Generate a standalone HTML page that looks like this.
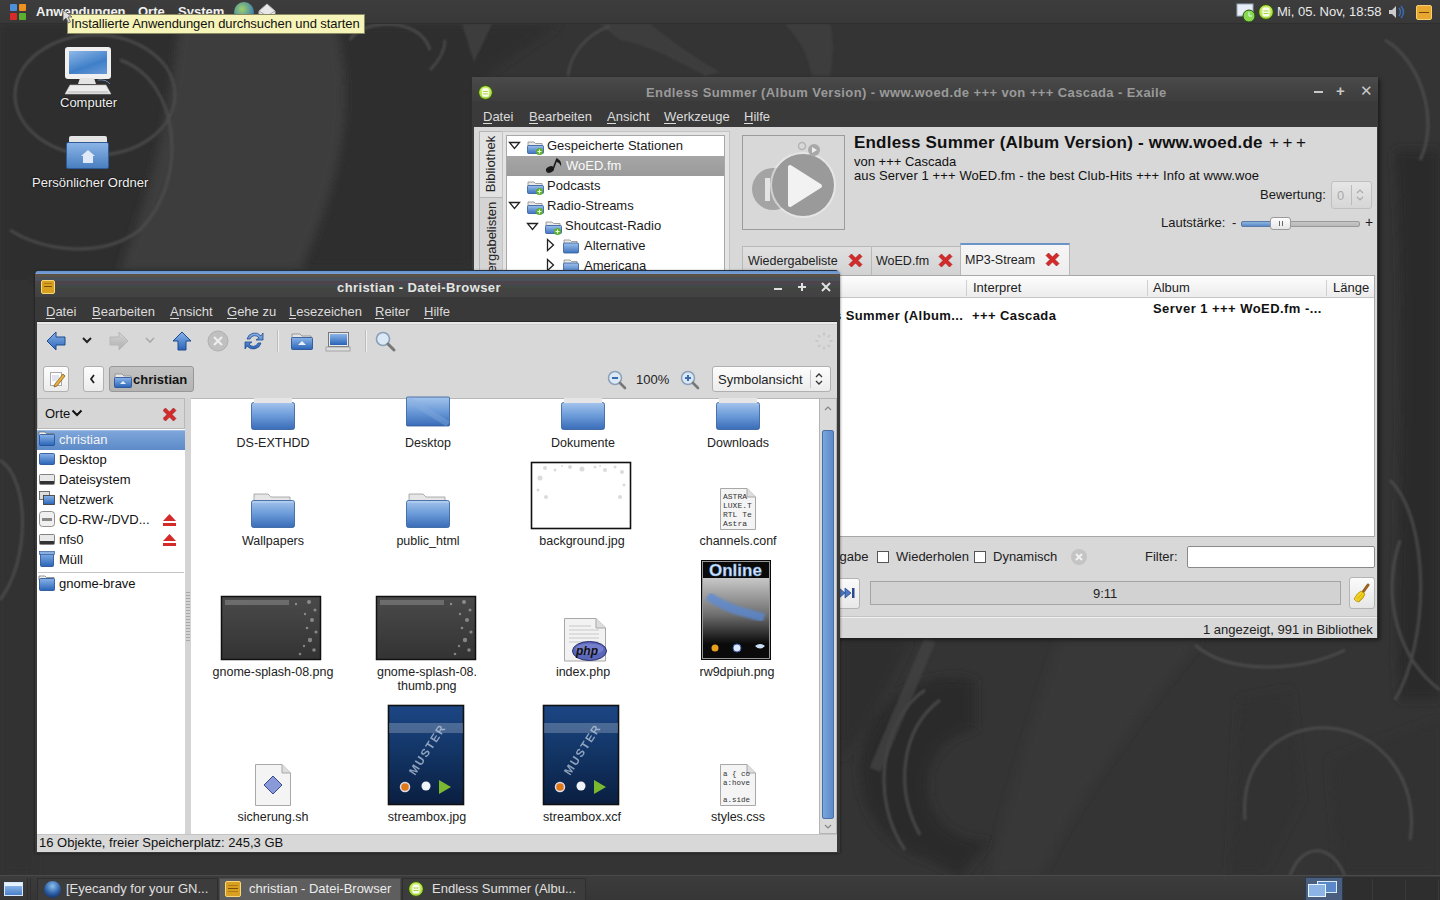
<!DOCTYPE html>
<html><head><meta charset="utf-8">
<style>
*{margin:0;padding:0;box-sizing:border-box}
html,body{width:1440px;height:900px;overflow:hidden}
body{position:relative;background:#363636;font-family:"Liberation Sans",sans-serif;font-size:13px;color:#1a1a1a}
.a{position:absolute}
.t{position:absolute;white-space:nowrap;line-height:15px;font-size:13px}
.w{color:#eee}
.b{font-weight:bold}
.il{transform:translateX(-50%);font-size:12.5px;color:#222}
u{text-decoration:none;border-bottom:1px solid currentColor;display:inline-block;line-height:12px}
</style></head><body>
<svg width="0" height="0" style="position:absolute"><defs>
 <radialGradient id="exg" cx="50%" cy="45%" r="55%"><stop offset="0" stop-color="#f0ffb0"/><stop offset=".6" stop-color="#c4ec5a"/><stop offset="1" stop-color="#8cc030"/></radialGradient>
 <symbol id="exi" viewBox="0 0 16 16"><circle cx="8" cy="8" r="7.4" fill="url(#exg)" stroke="#2e4a10" stroke-width="1"/><rect x="4.5" y="3.5" width="7" height="9" rx="1.5" fill="#f8fcec"/><path d="M5.5 7h5M5.5 9.5h5" stroke="#a8d040" stroke-width="1"/></symbol>
</defs></svg>

<!-- background swirls -->
<svg class="a" style="left:0;top:0" width="1440" height="900">
 <rect width="1440" height="900" fill="#343434"/>
 <defs><filter id="bb" x="-20%" y="-20%" width="140%" height="140%"><feGaussianBlur stdDeviation="5"/></filter><filter id="bs"><feGaussianBlur stdDeviation="0.8"/></filter></defs>
 <g fill="#2d2d2d" filter="url(#bb)">
  <path d="M0 24 H180 C170 120 150 200 120 280 L0 280Z"/>
  <path d="M0 280 H35 V876 H0Z" fill="#303030"/>
  <path d="M335 24 H560 C520 50 490 70 472 90 V270 H300 C330 200 360 120 335 24Z"/>
  <path d="M840 640 H910 L870 720 L840 760Z"/>
  <path d="M1395 150 H1440 V700 H1400 C1390 600 1410 400 1395 150Z" fill="#2c2c2c"/>
  <path d="M1240 700 L1290 690 L1300 800 L1260 876 H1230Z" fill="#303030"/>
  <path d="M1330 760 L1440 720 V876 H1340Z" fill="#313131"/>
  <path d="M975 680 A90 90 0 0 0 930 860 L960 876 L990 840 A50 50 0 0 1 975 730 Z" fill="#2b2b2b"/>
 </g>
 <g fill="#3c3c3c" filter="url(#bb)">
  <path d="M180 24 H335 C360 120 330 200 300 270 H120 C150 200 170 120 180 24Z"/>
  <path d="M1060 640 H1200 C1150 700 1080 790 1040 876 H990 C1010 790 1040 700 1060 640Z" fill="#393939"/>
 </g>
 <g fill="none" stroke="#4e4e4e" stroke-width="3" opacity=".85" filter="url(#bs)">
  <ellipse cx="95" cy="95" rx="80" ry="60"/>
  <path d="M120 60 C180 80 190 180 140 230 C100 260 40 250 10 230"/>
  <path d="M350 40 C360 20 420 15 430 50"/>
  <path d="M1245 820 C1240 760 1280 725 1330 728 C1380 732 1420 780 1410 840"/>
  <path d="M1290 876 C1300 845 1330 840 1345 876"/>
  <path d="M925 690 C880 720 870 800 905 850"/>
  <path d="M940 700 C900 730 895 790 920 835"/>
  <path d="M1195 645 C1230 675 1300 672 1345 650"/>
  <path d="M0 460 C30 480 30 560 0 600"/>
  <path d="M1385 40 C1420 60 1440 120 1420 160"/>
  <path d="M1390 480 C1430 520 1430 640 1395 700"/>
  <path d="M1400 540 C1380 600 1400 660 1440 690"/>
 </g>
 <g fill="#3e3e3e" filter="url(#bs)">
  <path d="M462 24 H492 L474 62 Z"/>
  <path d="M600 24 H650 C670 40 690 55 720 72 L705 76 C680 62 650 45 620 40 Z"/>
  <path d="M785 24 H830 C835 45 832 65 830 76 H812 C808 55 800 40 785 24Z"/>
 </g>
 <g fill="none" stroke="#484848" stroke-width="2.5" filter="url(#bs)">
  <path d="M568 76 C570 55 585 35 610 26"/>
  <path d="M430 70 C440 60 445 50 445 40"/>
 </g>
 <g fill="none" stroke="#424242" stroke-width="12" opacity=".8" filter="url(#bs)">
  <path d="M930 640 L875 770"/>
 </g>
</svg>

<!-- TOP PANEL -->
<div id="toppanel" class="a" style="left:0;top:0;width:1440px;height:24px;background:linear-gradient(#3d3d3d,#383838);border-bottom:1px solid #2e2e2e">
 <div class="a" style="left:10px;top:4px;width:7px;height:7px;background:#4f8fd8;border-radius:1px"></div>
 <div class="a" style="left:19px;top:4px;width:7px;height:7px;background:#f09020;border-radius:1px"></div>
 <div class="a" style="left:10px;top:13px;width:7px;height:7px;background:#d82a2a;border-radius:1px"></div>
 <div class="a" style="left:19px;top:13px;width:7px;height:7px;background:#5cb030;border-radius:1px"></div>
 <div class="t b w" style="left:36px;top:4px;color:#f0f0f0">Anwendungen</div>
 <div class="t b w" style="left:138px;top:4px;color:#f0f0f0">Orte</div>
 <div class="t b w" style="left:178px;top:4px;color:#f0f0f0">System</div>
 <div class="a" style="left:234px;top:2px;width:20px;height:20px;border-radius:50%;background:radial-gradient(circle at 40% 35%,#9fd06a,#3a7fb0 70%,#1f4f80)"></div>
 <svg class="a" style="left:257px;top:2px" width="20" height="20"><path d="M2 9 L10 2 L18 9 L18 18 L2 18 Z" fill="#e8e8e8" stroke="#bbb"/><path d="M2 9 L10 14 L18 9" fill="none" stroke="#aaa"/></svg>
 <svg class="a" style="left:1236px;top:3px" width="22" height="20"><rect x="1" y="1" width="16" height="12" fill="#e8eef8" stroke="#9ab"/><circle cx="13" cy="13" r="6" fill="#88d850" stroke="#245010"/><path d="M13 9v4h3" stroke="#dff" fill="none"/></svg>
 <svg class="a" style="left:1258px;top:4px" width="16" height="16"><use href="#exi"/></svg>
 <div class="t w" style="left:1277px;top:4px;color:#eaeaea">Mi, 05. Nov, 18:58</div>
 <svg class="a" style="left:1387px;top:3px" width="20" height="18"><path d="M2 7h3l4-4v12l-4-4H2z" fill="#ccc"/><path d="M12 5q3 4 0 8M14 3q5 6 0 12" stroke="#3a6ab0" fill="none" stroke-width="1.5"/></svg>
 <div class="a" style="left:1416px;top:5px;width:16px;height:15px;background:#e8a830;border:1px solid #f6d070;border-radius:2px"><div class="a" style="left:2px;top:6px;width:10px;height:1px;background:#6a4a10"></div></div>
</div>

<!-- DESKTOP ICONS -->
<div class="a" style="left:65px;top:47px;width:46px;height:32px;background:#f0f0f0;border-radius:3px"><div class="a" style="left:4px;top:4px;width:38px;height:23px;background:linear-gradient(160deg,#8fb8e8,#3f7fc8 60%,#6a9ad8)"></div></div>
<svg class="a" style="left:62px;top:77px" width="52" height="19"><path d="M18 1h14l2 6H16z" fill="#e4e4e4"/><path d="M8 8h36l5 9H3z" fill="#ececec" stroke="#b8b8b8" stroke-width=".6"/><path d="M6 15h40" stroke="#c4c4c4" stroke-width="1.5"/><path d="M36 3q8-1 12 4" stroke="#6a8ab0" fill="none" stroke-width="1"/></svg>
<div class="t w" style="left:60px;top:95px;color:#f0f0f0;text-shadow:0 0 2px #000">Computer</div>
<div class="a" style="left:69px;top:136px;width:38px;height:8px;background:#e4e4e4;border-radius:2px 2px 0 0"></div>
<div class="a" style="left:66px;top:142px;width:43px;height:27px;background:linear-gradient(#8ab4e6,#4a7fc0);border-radius:2px;border:1px solid #2e5a98"><div class="a" style="left:14px;top:7px;width:0;height:0;border-left:7px solid transparent;border-right:7px solid transparent;border-bottom:6px solid #dfe9f7"></div><div class="a" style="left:16px;top:13px;width:10px;height:7px;background:#dfe9f7"></div></div>
<div class="t w" style="left:32px;top:175px;color:#f0f0f0;text-shadow:0 0 2px #000">Persönlicher Ordner</div>

<!-- EXAILE -->
<div id="exaile" class="a" style="left:472px;top:77px;width:911px;height:566px">
 <div class="a" style="left:0;top:0;width:906px;height:561px;background:#3a3a3a;box-shadow:2px 2px 4px rgba(0,0,0,.5)"></div>
 <!-- title bar -->
 <div class="a" style="left:0;top:0;width:906px;height:24px;background:linear-gradient(#4a4a4a,#3d3d3d)"></div>
 <svg class="a" style="left:6px;top:8px" width="15" height="15"><use href="#exi"/></svg>
 <div class="t b" style="left:174px;top:8px;color:#9a9a9a;letter-spacing:0.4px">Endless Summer (Album Version) - www.woed.de +++ von +++ Cascada - Exaile</div>
 <div class="a" style="left:842px;top:14px;width:9px;height:2px;background:#c8c8c8"></div>
 <div class="t b" style="left:864px;top:6px;color:#c8c8c8;font-size:15px">+</div>
 <div class="t" style="left:888px;top:6px;color:#c8c8c8;font-size:15px">✕</div>
 <!-- menu -->
 <div class="t" style="left:11px;top:32px;color:#dcdcdc"><u>D</u>atei</div>
 <div class="t" style="left:57px;top:32px;color:#dcdcdc"><u>B</u>earbeiten</div>
 <div class="t" style="left:135px;top:32px;color:#dcdcdc"><u>A</u>nsicht</div>
 <div class="t" style="left:192px;top:32px;color:#dcdcdc"><u>W</u>erkzeuge</div>
 <div class="t" style="left:272px;top:32px;color:#dcdcdc"><u>H</u>ilfe</div>
 <!-- content -->
 <div class="a" style="left:2px;top:50px;width:903px;height:511px;background:#d8d8d8">
 </div>
</div>
<div id="exc" class="a" style="left:0;top:0">
 <!-- vertical tabs -->
 <div class="a" style="left:479px;top:131px;width:23px;height:67px;background:#e2e2e2;border:1px solid #b4b4b4;border-right:none"></div>
 <div class="a" style="left:479px;top:197px;width:23px;height:90px;background:#d4d4d4;border:1px solid #b4b4b4;border-right:none"></div>
 <div class="t" style="left:490px;top:164px;transform:translate(-50%,-50%) rotate(-90deg);color:#222">Bibliothek</div>
 <div class="t" style="left:491px;top:252px;transform:translate(-50%,-50%) rotate(-90deg);color:#222">Wiedergabelisten</div>
 <!-- tree frame -->
 <div class="a" style="left:502px;top:131px;width:228px;height:160px;background:#e4e4e4;border:1px solid #c4c4c4"></div>
 <div class="a" style="left:506px;top:135px;width:219px;height:150px;background:#fff;border:1px solid #a8a8a8"></div>
 <div class="a" style="left:507px;top:156px;width:217px;height:20px;background:linear-gradient(#a6a6a6,#9a9a9a)"></div>
 <svg class="a" style="left:508px;top:140px" width="14" height="80"><path d="M1.5 2.5h10l-5 6z" fill="none" stroke="#222" stroke-width="1.3"/><path d="M1.5 62.5h10l-5 6z" fill="none" stroke="#222" stroke-width="1.3"/></svg>
 <svg class="a" style="left:526px;top:221px" width="14" height="14"><path d="M1.5 2.5h10l-5 6z" fill="none" stroke="#222" stroke-width="1.3"/></svg>
 <svg class="a" style="left:546px;top:238px" width="10" height="40"><path d="M1.5 1.5v11l6-5.5z" fill="none" stroke="#222" stroke-width="1.3"/><path d="M1.5 21.5v11l6-5.5z" fill="none" stroke="#222" stroke-width="1.3"/></svg>
 <svg class="a" style="left:0;top:0;overflow:visible" width="1" height="1">
  <defs><linearGradient id="fg" x1="0" y1="0" x2="0" y2="1"><stop offset="0" stop-color="#9cc0ec"/><stop offset="1" stop-color="#3f74c0"/></linearGradient>
  <g id="sfold"><path d="M1 2h6l1.5 1.5H15V6H1z" fill="#e8e8e8" stroke="#8a8a8a" stroke-width=".8"/><rect x="0.5" y="5.5" width="16" height="8" rx="1" fill="url(#fg)" stroke="#2e5a98" stroke-width=".8"/><circle cx="12.5" cy="11.5" r="3.5" fill="#5cb030"/><path d="M12.5 9.5v4M10.5 11.5h4" stroke="#e8ffd0" stroke-width="1.2"/></g>
  <g id="pfold"><path d="M1 1h6l1.5 1.5H14V5H1z" fill="#eaeaea" stroke="#8a8a8a" stroke-width=".8"/><rect x="0.5" y="4" width="15" height="10" rx="1" fill="url(#fg)" stroke="#2e5a98" stroke-width=".8"/></g></defs>
  <use href="#sfold" x="527" y="140"/><use href="#sfold" x="527" y="180"/><use href="#sfold" x="527" y="200"/><use href="#sfold" x="545" y="220"/>
  <use href="#pfold" x="563" y="239"/><use href="#pfold" x="563" y="259"/>
  <ellipse cx="550" cy="169.5" rx="4.2" ry="3" transform="rotate(-25 550 169.5)" fill="#1a1a1a"/><path d="M553.5 168 L557 158.5" stroke="#1a1a1a" stroke-width="1.6"/><path d="M557 158.5 q5 2 4 8 q-1-4-4.5-4.5z" fill="#1a1a1a"/>
 </svg>
 <div class="t" style="left:547px;top:138px">Gespeicherte Stationen</div>
 <div class="t" style="left:566px;top:158px;color:#fafafa">WoED.fm</div>
 <div class="t" style="left:547px;top:178px">Podcasts</div>
 <div class="t" style="left:547px;top:198px">Radio-Streams</div>
 <div class="t" style="left:565px;top:218px">Shoutcast-Radio</div>
 <div class="t" style="left:584px;top:238px">Alternative</div>
 <div class="t" style="left:584px;top:258px">Americana</div>
 <!-- album art -->
 <div class="a" style="left:742px;top:135px;width:103px;height:95px;background:#d8d8d8;border:1px solid #9c9c9c"></div>
 <svg class="a" style="left:742px;top:135px" width="103" height="95">
  <circle cx="31" cy="54" r="21" fill="#a4a4a4"/>
  <path d="M23 43 h5 v23 h-5z" fill="#e4e4e4"/>
  <circle cx="61" cy="50" r="33" fill="#f0f0f0" opacity=".6"/>
  <circle cx="61" cy="50" r="31" fill="#9a9a9a"/>
  <path d="M48 32 L48 70 L78 51 Z" fill="#f2f2f2" stroke="#f2f2f2" stroke-width="4" stroke-linejoin="round"/>
  <circle cx="60" cy="11" r="3.5" fill="none" stroke="#b4b4b4" stroke-width="1.5"/>
  <circle cx="72" cy="15" r="6" fill="#a8a8a8"/><path d="M70 12 v6 l5 -3z" fill="#eee"/>
 </svg>
 <div class="t b" style="left:854px;top:133px;font-size:17px;line-height:20px;letter-spacing:0.2px;color:#111">Endless Summer (Album Version) - www.woed.de</div>
 <div class="t" style="left:1269px;top:133px;font-size:17px;line-height:20px;letter-spacing:3.6px;color:#111">+++</div>
 <div class="t" style="left:854px;top:154px;color:#111">von +++ Cascada</div>
 <div class="t" style="left:854px;top:168px;color:#111;letter-spacing:0.1px">aus Server 1 +++ WoED.fm - the best Club-Hits +++ Info at www.woe</div>
 <div class="t" style="left:1260px;top:187px">Bewertung:</div>
 <div class="a" style="left:1331px;top:181px;width:41px;height:28px;background:linear-gradient(#e6e6e6,#d6d6d6);border:1px solid #c0c0c0;border-radius:3px"></div>
 <div class="a" style="left:1351px;top:185px;width:1px;height:20px;background:#bbb"></div>
 <div class="t" style="left:1337px;top:188px;color:#aaa">0</div>
 <svg class="a" style="left:1354px;top:187px" width="12" height="16"><path d="M3 6l3-3 3 3M3 10l3 3 3-3" fill="none" stroke="#aaa" stroke-width="1.2"/></svg>
 <div class="t" style="left:1161px;top:215px">Lautstärke:</div>
 <div class="t" style="left:1232px;top:215px">-</div>
 <div class="a" style="left:1241px;top:221px;width:119px;height:6px;background:linear-gradient(#c6c6c6,#b8b8b8);border:1px solid #9a9a9a;border-radius:2px"></div>
 <div class="a" style="left:1241px;top:221px;width:32px;height:6px;background:linear-gradient(#8fb4e0,#5a8ac8);border:1px solid #5a7aa8;border-radius:2px"></div>
 <div class="a" style="left:1270px;top:217px;width:21px;height:13px;background:linear-gradient(#fdfdfd,#e6e6e6);border:1px solid #9a9a9a;border-radius:3px"></div>
 <div class="a" style="left:1279px;top:221px;width:1px;height:5px;background:#666"></div><div class="a" style="left:1282px;top:221px;width:1px;height:5px;background:#666"></div>
 <div class="t" style="left:1365px;top:215px;font-size:14px">+</div>
 <!-- tabs -->
 <div class="a" style="left:742px;top:246px;width:130px;height:30px;background:linear-gradient(#e0e0e0,#d2d2d2);border:1px solid #b8b8b8;border-bottom:none"></div>
 <div class="a" style="left:871px;top:246px;width:90px;height:30px;background:linear-gradient(#e0e0e0,#d2d2d2);border:1px solid #b8b8b8;border-bottom:none"></div>
 <div class="a" style="left:960px;top:243px;width:110px;height:33px;background:linear-gradient(#f6f6f6,#ececec);border:1px solid #b8b8b8;border-top:2px solid #6a94c8;border-bottom:none"></div>
 <div class="t" style="left:748px;top:254px;font-size:12.5px;color:#222">Wiedergabeliste</div>
 <div class="t" style="left:876px;top:254px;font-size:12.5px;color:#222">WoED.fm</div>
 <div class="t" style="left:965px;top:253px;font-size:12.5px;color:#222">MP3-Stream</div>
 <svg class="a" style="left:0;top:0;overflow:visible" width="1" height="1">
  <defs><g id="rx"><path d="M0 2.5 L2.5 0 L6.5 4 L10.5 0 L13 2.5 L9 6.5 L13 10.5 L10.5 13 L6.5 9 L2.5 13 L0 10.5 L4 6.5 Z" fill="#d42a2a" stroke="#a01818" stroke-width=".6"/></g></defs>
  <use href="#rx" x="849" y="254"/><use href="#rx" x="939" y="254"/><use href="#rx" x="1046" y="253"/>
 </svg>
 <!-- list -->
 <div class="a" style="left:742px;top:275px;width:633px;height:262px;background:#fff;border:1px solid #a8a8a8"></div>
 <div class="a" style="left:743px;top:276px;width:631px;height:22px;background:linear-gradient(#fdfdfd,#ececec);border-bottom:1px solid #c4c4c4"></div>
 <div class="a" style="left:966px;top:280px;width:1px;height:16px;background:#d0d0d0"></div>
 <div class="a" style="left:1147px;top:280px;width:1px;height:16px;background:#d0d0d0"></div>
 <div class="a" style="left:1326px;top:280px;width:1px;height:16px;background:#d0d0d0"></div>
 <div class="t" style="left:973px;top:280px;color:#222">Interpret</div>
 <div class="t" style="left:1153px;top:280px;color:#222">Album</div>
 <div class="t" style="left:1333px;top:280px;color:#222">Länge</div>
 <div class="t b" style="left:789px;top:308px;color:#111;letter-spacing:0.4px">Endless Summer (Album...</div>
 <div class="t b" style="left:972px;top:308px;color:#111;letter-spacing:0.4px">+++ Cascada</div>
 <div class="t b" style="left:1153px;top:301px;color:#111;letter-spacing:0.45px">Server 1 +++ WoED.fm -...</div>
 <!-- controls -->
 <div class="t" style="left:763px;top:549px;color:#222">Zufallswiedergabe</div>
 <div class="a" style="left:877px;top:551px;width:12px;height:12px;background:#fff;border:1px solid #555"></div>
 <div class="t" style="left:896px;top:549px;color:#222">Wiederholen</div>
 <div class="a" style="left:974px;top:551px;width:12px;height:12px;background:#fff;border:1px solid #555"></div>
 <div class="t" style="left:993px;top:549px;color:#222">Dynamisch</div>
 <div class="a" style="left:1071px;top:549px;width:16px;height:16px;border-radius:50%;background:#c4c4c4"></div>
 <svg class="a" style="left:1071px;top:549px" width="16" height="16"><path d="M5 5l6 6M11 5l-6 6" stroke="#f2f2f2" stroke-width="2"/></svg>
 <div class="t" style="left:1145px;top:549px;color:#222">Filter:</div>
 <div class="a" style="left:1187px;top:546px;width:188px;height:22px;background:#fff;border:1px solid #8a8a8a;border-radius:2px"></div>
 <div class="a" style="left:820px;top:578px;width:40px;height:31px;background:linear-gradient(#fbfbfb,#e8e8e8);border:1px solid #b4b4b4;border-radius:3px"></div>
 <svg class="a" style="left:838px;top:586px" width="20" height="14"><path d="M1 2l6 5-6 5zM7 2l6 5-6 5z" fill="#4a7ac0" stroke="#2a4a90" stroke-width=".8"/><rect x="14" y="2" width="2.5" height="10" fill="#2a4a90"/></svg>
 <div class="a" style="left:870px;top:581px;width:471px;height:24px;background:#d2d2d2;border:1px solid #a4a4a4"></div>
 <div class="t" style="left:1093px;top:586px;color:#222">9:11</div>
 <div class="a" style="left:1349px;top:577px;width:26px;height:32px;background:linear-gradient(#fbfbfb,#e6e6e6);border:1px solid #b4b4b4;border-radius:3px"></div>
 <svg class="a" style="left:1352px;top:583px" width="20" height="20"><path d="M11 9 L16 2" stroke="#9a6020" stroke-width="3" stroke-linecap="round"/><path d="M2 16 Q5 10 9 8 L13 11 Q12 15 7 19 Q4 19 2 16Z" fill="#f0d020" stroke="#b89010" stroke-width=".8"/><path d="M5 16 L10 11 M7 18 L12 12" stroke="#c8a010" stroke-width=".7"/></svg>
 <div class="a" style="left:474px;top:616px;width:903px;height:1px;background:#c4c4c4"></div>
 <div class="a" style="left:474px;top:617px;width:903px;height:1px;background:#f0f0f0"></div>
 <div class="t" style="left:1203px;top:622px;color:#222">1 angezeigt, 991 in Bibliothek</div>
</div>

<!-- NAUTILUS -->
<div id="naut" class="a" style="left:0;top:0">
 <div class="a" style="left:35px;top:271px;width:805px;height:582px;background:#393939;border-radius:5px 5px 0 0;box-shadow:0 0 3px rgba(0,0,0,.6)"></div>
 <div class="a" style="left:35px;top:270px;width:805px;height:27px;border-radius:5px 5px 0 0;background:linear-gradient(#243040 0,#243040 1.5px,#6a94cc 1.5px,#7aa0d8 4px,#5a5244 4px,#5a5244 7px,#4a5058 7px,#4a5058 11px,#504448 11px,#484650 15px,#404a40 17px,#434343 20px,#424242 27px)"></div>
 <div class="a" style="left:41px;top:280px;width:14px;height:14px;background:#d8a020;border:1px solid #f8d878;border-radius:2px"><div class="a" style="left:2px;top:5px;width:8px;height:1px;background:#7a5008"></div><div class="a" style="left:2px;top:2px;width:8px;height:1px;background:#b07a10"></div></div>
 <div class="t b" style="left:337px;top:280px;color:#e4e4e4;letter-spacing:0.4px">christian - Datei-Browser</div>
 <div class="a" style="left:774px;top:288px;width:8px;height:2px;background:#e0e0e0"></div>
 <div class="a" style="left:798px;top:286px;width:8px;height:2px;background:#e0e0e0"></div><div class="a" style="left:801px;top:283px;width:2px;height:8px;background:#e0e0e0"></div>
 <svg class="a" style="left:821px;top:282px" width="10" height="10"><path d="M1 1l8 8M9 1l-8 8" stroke="#e0e0e0" stroke-width="2"/></svg>
 <div class="t" style="left:46px;top:304px;color:#dcdcdc"><u>D</u>atei</div>
 <div class="t" style="left:92px;top:304px;color:#dcdcdc"><u>B</u>earbeiten</div>
 <div class="t" style="left:170px;top:304px;color:#dcdcdc"><u>A</u>nsicht</div>
 <div class="t" style="left:227px;top:304px;color:#dcdcdc"><u>G</u>ehe zu</div>
 <div class="t" style="left:289px;top:304px;color:#dcdcdc"><u>L</u>esezeichen</div>
 <div class="t" style="left:375px;top:304px;color:#dcdcdc"><u>R</u>eiter</div>
 <div class="t" style="left:424px;top:304px;color:#dcdcdc"><u>H</u>ilfe</div>
 <!-- content -->
 <div class="a" style="left:37px;top:322px;width:800px;height:530px;background:#d8d8d8"></div>
 <div class="a" style="left:37px;top:321px;width:800px;height:1px;background:#2a2a2a"></div><div class="a" style="left:37px;top:322px;width:800px;height:2px;background:#e8e8e8"></div><div class="a" style="left:37px;top:324px;width:800px;height:1px;background:#cecece"></div>
 <!-- toolbar icons -->
 <svg class="a" style="left:0;top:0;overflow:visible" width="1" height="1">
  <defs>
   <linearGradient id="bl" x1="0" y1="0" x2="0" y2="1"><stop offset="0" stop-color="#8ab4e8"/><stop offset="1" stop-color="#2a64b8"/></linearGradient>
   <linearGradient id="gr" x1="0" y1="0" x2="0" y2="1"><stop offset="0" stop-color="#d4d4d4"/><stop offset="1" stop-color="#b0b0b0"/></linearGradient>
  </defs>
  <path d="M47 341 L56 332 L56 337 L65 337 L65 345 L56 345 L56 350 Z" fill="url(#bl)" stroke="#1e4a90" stroke-width="1"/>
  <path d="M83 338 L87 342 L91 338" fill="none" stroke="#222" stroke-width="2"/>
  <path d="M128 341 L119 332 L119 337 L110 337 L110 345 L119 345 L119 350 Z" fill="url(#gr)" stroke="#b8b8b8" stroke-width="1"/>
  <path d="M146 338 L150 342 L154 338" fill="none" stroke="#aaa" stroke-width="1.6"/>
  <path d="M182 332 L191 341 L186 341 L186 350 L178 350 L178 341 L173 341 Z" fill="url(#bl)" stroke="#1e4a90" stroke-width="1"/>
  <circle cx="218" cy="341" r="10" fill="#c0c0c0" stroke="#b0b0b0"/><path d="M214 337l8 8M222 337l-8 8" stroke="#eee" stroke-width="2.2"/>
  <path d="M247 339 a8 8 0 0 1 14 -3 l2 -3 v7 h-7 l3 -2 a5 5 0 0 0 -9 1z M261 343 a8 8 0 0 1 -14 3 l-2 3 v-7 h7 l-3 2 a5 5 0 0 0 9 -1z" fill="url(#bl)" stroke="#1e4a90" stroke-width=".8"/>
  <rect x="277" y="330" width="1" height="22" fill="#bcbcbc"/><rect x="278" y="330" width="1" height="22" fill="#f0f0f0"/>
  <path d="M292 334 h8 l2 2 h9 v3 h-19z" fill="#e4e4e4" stroke="#888" stroke-width=".8"/>
  <rect x="291.5" y="337.5" width="21" height="12" rx="1" fill="url(#bl)" stroke="#1e4a90" stroke-width=".8"/>
  <path d="M298 345 l4-4 4 4z" fill="#e8f0fa"/>
  <rect x="328.5" y="332.5" width="20" height="14" fill="#e8e8e8" stroke="#777"/><rect x="330" y="334" width="17" height="11" fill="url(#bl)"/>
  <rect x="326" y="347" width="24" height="4" fill="#ddd" stroke="#999" stroke-width=".8"/>
  <rect x="365" y="330" width="1" height="22" fill="#bcbcbc"/><rect x="366" y="330" width="1" height="22" fill="#f0f0f0"/>
  <circle cx="383" cy="339" r="6.5" fill="#dbe8f6" stroke="#8aa0b8" stroke-width="1.6"/><path d="M388 344 l6 6" stroke="#777" stroke-width="3" stroke-linecap="round"/>
  <g stroke="#c4c4c4" stroke-width="1.6" stroke-linecap="round"><path d="M824 333v2M824 347v2M816 341h2M830 341h2M818.5 335.5l1.2 1.2M828.3 345.3l1.2 1.2M818.5 346.5l1.2-1.2M828.3 336.7l1.2-1.2"/></g>
 </svg>
 <!-- location bar -->
 <div class="a" style="left:43px;top:366px;width:26px;height:26px;background:linear-gradient(#fdfdfd,#ececec);border:1px solid #b0b0b0;border-radius:3px"></div>
 <svg class="a" style="left:48px;top:370px" width="18" height="18"><rect x="2.5" y="2.5" width="11" height="13" fill="#fff" stroke="#aaa"/><path d="M4 6h7M4 8h7M4 10h5" stroke="#c8c8e0"/><path d="M7 14 L15 4 L17 6 L9 16 L6 17z" fill="#e8b040" stroke="#806020" stroke-width=".8"/></svg>
 <div class="a" style="left:83px;top:366px;width:21px;height:26px;background:linear-gradient(#fdfdfd,#ececec);border:1px solid #b0b0b0;border-radius:3px"></div>
 <svg class="a" style="left:88px;top:373px" width="10" height="12"><path d="M6 2 L3 6 L6 10" fill="none" stroke="#222" stroke-width="1.8"/></svg>
 <div class="a" style="left:109px;top:366px;width:85px;height:26px;background:linear-gradient(#c2c2c2,#b4b4b4);border:1px solid #989898;border-radius:3px"></div>
 <svg class="a" style="left:113px;top:371px" width="20" height="18"><path d="M2 3 h7 l2 2 h7 v3 H2z" fill="#e8e8e8" stroke="#888" stroke-width=".8"/><rect x="1.5" y="6.5" width="17" height="10" rx="1" fill="url(#bl)" stroke="#1e4a90" stroke-width=".8"/><path d="M7 13 l3-3 3 3z" fill="#e8f0fa"/></svg>
 <div class="t b" style="left:133px;top:372px;color:#111">christian</div>
 <svg class="a" style="left:606px;top:369px" width="22" height="22"><circle cx="9" cy="9" r="6.5" fill="#dbe8f6" stroke="#8aa0b8" stroke-width="1.5"/><path d="M6 9h6" stroke="#3a6ab0" stroke-width="2"/><path d="M14 14 l5 5" stroke="#777" stroke-width="2.6" stroke-linecap="round"/></svg>
 <div class="t" style="left:636px;top:372px;color:#222">100%</div>
 <svg class="a" style="left:679px;top:369px" width="22" height="22"><circle cx="9" cy="9" r="6.5" fill="#dbe8f6" stroke="#8aa0b8" stroke-width="1.5"/><path d="M6 9h6M9 6v6" stroke="#3a6ab0" stroke-width="2"/><path d="M14 14 l5 5" stroke="#777" stroke-width="2.6" stroke-linecap="round"/></svg>
 <div class="a" style="left:712px;top:366px;width:119px;height:26px;background:linear-gradient(#fdfdfd,#ececec);border:1px solid #b0b0b0;border-radius:3px"></div>
 <div class="a" style="left:810px;top:370px;width:1px;height:18px;background:#c8c8c8"></div>
 <div class="t" style="left:718px;top:372px;color:#222">Symbolansicht</div>
 <svg class="a" style="left:813px;top:371px" width="12" height="16"><path d="M3 6l3-3 3 3M3 10l3 3 3-3" fill="none" stroke="#333" stroke-width="1.3"/></svg>
 <!-- sidebar -->
 <div class="a" style="left:37px;top:398px;width:148px;height:31px;background:#d6d6d6;border:1px solid #b8b8b8"></div>
 <div class="t" style="left:45px;top:406px;color:#111">Orte</div>
 <svg class="a" style="left:71px;top:408px" width="12" height="10"><path d="M1.5 2.5 L6 7 L10.5 2.5" fill="none" stroke="#111" stroke-width="2"/></svg>
 <svg class="a" style="left:163px;top:408px" width="14" height="13"><path d="M0 2.5 L2.5 0 L6.5 4 L10.5 0 L13 2.5 L9 6.5 L13 10.5 L10.5 13 L6.5 9 L2.5 13 L0 10.5 L4 6.5 Z" fill="#d42a2a" stroke="#a01818" stroke-width=".6"/></svg>
 <div class="a" style="left:37px;top:429px;width:148px;height:405px;background:#fff"></div>
 <div class="a" style="left:37px;top:430px;width:148px;height:20px;background:linear-gradient(#7ea6da,#5c8ac8);border-top:1px solid #9cbce6"></div>
 <svg class="a" style="left:0;top:0;overflow:visible" width="1" height="1">
  <defs><g id="sic"><rect x="0.5" y="2.5" width="15" height="11" rx="1" fill="url(#bl)" stroke="#1e4a90" stroke-width=".8"/></g>
  <g id="drv"><rect x="0.5" y="3.5" width="15" height="10" rx="1" fill="#e8e8e8" stroke="#666" stroke-width=".8"/><rect x="1" y="10" width="14" height="3" fill="#333"/></g>
  <g id="ej"><path d="M0 7 L6.5 0 L13 7z" fill="#d42a2a"/><rect x="0" y="9" width="13" height="3" fill="#d42a2a"/></g></defs>
  <path d="M39 432 h6 l1.5 1.5 H54 V436 H39z" fill="#eee" stroke="#555" stroke-width=".6"/><rect x="39.5" y="434.5" width="15" height="11" rx="1" fill="url(#bl)" stroke="#1e4a90" stroke-width=".8"/>
  <use href="#sic" x="39" y="451"/>
  <use href="#drv" x="39" y="471"/>
  <rect x="39.5" y="491.5" width="10" height="8" fill="#ddd" stroke="#555" stroke-width=".8"/><rect x="43.5" y="495.5" width="11" height="9" fill="url(#bl)" stroke="#333" stroke-width=".8"/>
  <rect x="39.5" y="511.5" width="15" height="15" rx="3" fill="#f0f0f0" stroke="#777" stroke-width=".8"/><rect x="42" y="518" width="10" height="3" fill="#888"/>
  <use href="#drv" x="39" y="531"/>
  <rect x="40.5" y="552.5" width="13" height="14" rx="1" fill="url(#bl)" stroke="#1e4a90" stroke-width=".8"/><rect x="39.5" y="551.5" width="15" height="3" fill="#8ab0e0" stroke="#1e4a90" stroke-width=".6"/>
  <use href="#ej" x="163" y="514"/><use href="#ej" x="163" y="534"/>
  <rect x="38" y="572" width="146" height="1" fill="#c4c4c4"/>
  <path d="M39 576 h6 l1.5 1.5 H54 V580 H39z" fill="#eee" stroke="#555" stroke-width=".6"/><rect x="39.5" y="578.5" width="15" height="12" rx="1" fill="url(#bl)" stroke="#1e4a90" stroke-width=".8"/>
 </svg>
 <div class="t" style="left:59px;top:432px;color:#f4f4f4">christian</div>
 <div class="t" style="left:59px;top:452px;color:#111">Desktop</div>
 <div class="t" style="left:59px;top:472px;color:#111">Dateisystem</div>
 <div class="t" style="left:59px;top:492px;color:#111">Netzwerk</div>
 <div class="t" style="left:59px;top:512px;color:#111">CD-RW-/DVD...</div>
 <div class="t" style="left:59px;top:532px;color:#111">nfs0</div>
 <div class="t" style="left:59px;top:552px;color:#111">Müll</div>
 <div class="t" style="left:59px;top:576px;color:#111">gnome-brave</div>
 <!-- pane separator -->
 <div class="a" style="left:185px;top:398px;width:6px;height:436px;background:#d4d4d4"></div><div class="a" style="left:186px;top:592px;width:4px;height:50px;background:repeating-linear-gradient(#a8a8a8 0 1px,transparent 1px 3px)"></div>
 <!-- icon view -->
 <div class="a" style="left:191px;top:398px;width:628px;height:436px;background:#fff;border-top:1px solid #b8b8b8"></div>
 <!-- icon view items -->
 <svg class="a" style="left:0;top:0;overflow:visible" width="1" height="1">
  <defs>
   <linearGradient id="fb" x1="0" y1="0" x2="0" y2="1"><stop offset="0" stop-color="#a4c4ec"/><stop offset=".5" stop-color="#6a9ad8"/><stop offset="1" stop-color="#3a6cb8"/></linearGradient>
   <g id="bigf"><path d="M3 0 h14 l3 3 h19 v10 H3z" fill="#e6e6e6" stroke="#9a9a9a" stroke-width=".8"/><rect x="0.5" y="6.5" width="43" height="27" rx="2" fill="url(#fb)" stroke="#2e5a98" stroke-width=".8"/><rect x="1.5" y="7.5" width="41" height="1" fill="#c4dcf6" opacity=".8"/></g>
   <linearGradient id="spl" x1="0" y1="0" x2="0" y2="1"><stop offset="0" stop-color="#4a4a4a"/><stop offset="1" stop-color="#333"/></linearGradient>
   <linearGradient id="stb" x1="0" y1="0" x2="0" y2="1"><stop offset="0" stop-color="#1c4684"/><stop offset=".5" stop-color="#123464"/><stop offset="1" stop-color="#0a1e40"/></linearGradient>
   <linearGradient id="onl" x1="0" y1="0" x2="0" y2="1"><stop offset="0" stop-color="#c8c8c8"/><stop offset=".55" stop-color="#707070"/><stop offset="1" stop-color="#0a0a0a"/></linearGradient>
   <g id="doc"><path d="M0.5 0.5 H27 L35.5 9 V41.5 H0.5Z" fill="#f4f4f4" stroke="#a8a8a8"/><path d="M27 0.5 V9 H35.5" fill="#ddd" stroke="#a8a8a8"/></g>
  </defs>
  <g transform="translate(251,396)"><rect x="0.5" y="6.5" width="43" height="27" rx="2" fill="url(#fb)" stroke="#2e5a98" stroke-width=".8"/><rect x="3" y="2" width="38" height="5" fill="#e6e6e6"/></g>
  <g transform="translate(406,396)"><rect x="0.5" y="1" width="43" height="29" rx="1" fill="url(#fb)" stroke="#2e5a98" stroke-width=".8"/><path d="M2 3 L42 28" stroke="#8ab0e0" stroke-width="6" opacity=".35"/></g>
  <g transform="translate(561,396)"><rect x="0.5" y="6.5" width="43" height="27" rx="2" fill="url(#fb)" stroke="#2e5a98" stroke-width=".8"/><rect x="3" y="2" width="38" height="5" fill="#e6e6e6"/></g>
  <g transform="translate(716,396)"><rect x="0.5" y="6.5" width="43" height="27" rx="2" fill="url(#fb)" stroke="#2e5a98" stroke-width=".8"/><rect x="3" y="2" width="38" height="5" fill="#e6e6e6"/></g>
  <use href="#bigf" x="251" y="494"/>
  <use href="#bigf" x="406" y="494"/>
  <rect x="531.5" y="462.5" width="99" height="66" fill="#fff" stroke="#111" stroke-width="1.6"/>
  <g fill="#9a9a9a" opacity=".35"><circle cx="545" cy="468" r="2"/><circle cx="555" cy="470" r="1.5"/><circle cx="570" cy="467" r="2"/><circle cx="582" cy="469" r="2.5"/><circle cx="595" cy="467" r="1.5"/><circle cx="605" cy="470" r="2"/><circle cx="615" cy="467" r="1.5"/><circle cx="622" cy="472" r="2"/><circle cx="540" cy="478" r="2.5"/><circle cx="538" cy="490" r="1.5"/><circle cx="546" cy="497" r="2"/><circle cx="624" cy="485" r="1.5"/><circle cx="620" cy="497" r="2"/><circle cx="562" cy="466" r="1"/><circle cx="600" cy="466" r="1"/></g>
  <use href="#doc" x="720" y="488"/>
  <text x="723" y="499" font-family="Liberation Mono" font-size="8" fill="#333">ASTRA</text><text x="723" y="508" font-family="Liberation Mono" font-size="8" fill="#333">LUXE.T</text><text x="723" y="517" font-family="Liberation Mono" font-size="8" fill="#333">RTL Te</text><text x="723" y="526" font-family="Liberation Mono" font-size="8" fill="#333">Astra</text>
  <rect x="221.5" y="596.5" width="99" height="63" fill="url(#spl)" stroke="#111" stroke-width="1.5"/>
  <rect x="376.5" y="596.5" width="99" height="63" fill="url(#spl)" stroke="#111" stroke-width="1.5"/>
  <g fill="#8a8a8a" opacity=".55"><rect x="225" y="600" width="64" height="5"/><rect x="380" y="600" width="64" height="5"/></g>
  <g fill="#b8b8b8" opacity=".6">
  <circle cx="309" cy="602" r="2"/><circle cx="315" cy="610" r="1.5"/><circle cx="305" cy="614" r="1.2"/><circle cx="312" cy="620" r="2"/><circle cx="307" cy="628" r="1.3"/><circle cx="316" cy="632" r="1.6"/><circle cx="310" cy="640" r="2.2"/><circle cx="304" cy="646" r="1.2"/><circle cx="314" cy="650" r="1.8"/><circle cx="300" cy="654" r="1.3"/><circle cx="296" cy="604" r="1.2"/>
  <circle cx="464" cy="602" r="2"/><circle cx="470" cy="610" r="1.5"/><circle cx="460" cy="614" r="1.2"/><circle cx="467" cy="620" r="2"/><circle cx="462" cy="628" r="1.3"/><circle cx="471" cy="632" r="1.6"/><circle cx="465" cy="640" r="2.2"/><circle cx="459" cy="646" r="1.2"/><circle cx="469" cy="650" r="1.8"/><circle cx="455" cy="654" r="1.3"/><circle cx="451" cy="604" r="1.2"/></g>
  <g transform="translate(564,618)"><path d="M0.5 0.5 H32 L41.5 10 V43 H0.5Z" fill="#f2f2f2" stroke="#a8a8a8"/><path d="M32 0.5 V10 H41.5" fill="#ddd" stroke="#a8a8a8"/><g stroke="#c8c8c8"><path d="M5 8h22M5 12h30M5 16h30M5 20h30M5 24h30"/></g><ellipse cx="25.5" cy="33" rx="17" ry="9.5" fill="#5a66b8" stroke="#2a3070"/><ellipse cx="25.5" cy="31" rx="14" ry="5.5" fill="#8890d8" opacity=".6"/><text x="12" y="37" font-family="Liberation Sans" font-style="italic" font-weight="bold" font-size="12" fill="#111">php</text></g>
  <rect x="701" y="560" width="70" height="100" fill="#0a0a0a"/>
  <rect x="702.5" y="561.5" width="67" height="97" fill="none" stroke="#bbb" stroke-width=".8"/>
  <rect x="703" y="578" width="66" height="66" fill="url(#onl)"/>
  <text x="709" y="576" font-family="Liberation Sans" font-weight="bold" font-size="17" fill="#cfe4fc" stroke="#6a9ad8" stroke-width=".4">Online</text>
  <path d="M708 596 q16 10 28 14 q14 4 28 8" stroke="#5a8ad8" stroke-width="9" fill="none" opacity=".75" filter="url(#bs)"/>
  <circle cx="715" cy="648" r="3.5" fill="#e8a020"/><circle cx="737" cy="648" r="4" fill="#dde8f8" stroke="#3a5ab0" stroke-width="1"/><path d="M755 646 q5-4 10 0 q-5 5-10 0z" fill="#cde0f8"/>
  <use href="#doc" x="255" y="764"/>
  <path d="M264 785 l9 -9 9 9 -9 9z" fill="#8a9ad8" stroke="#3a4a90"/>
  <rect x="388.5" y="705.5" width="75" height="99" fill="url(#stb)" stroke="#111" stroke-width="1.6"/>
  <rect x="389" y="723" width="74" height="10" fill="#fff" opacity=".22"/>
  <text x="0" y="0" transform="translate(415,776) rotate(-57)" font-family="Liberation Sans" font-weight="bold" font-size="11.5" fill="#b8c8dc" opacity=".75" letter-spacing="1.6">MUSTER</text>
  <circle cx="405" cy="787" r="4.5" fill="#e07818" stroke="#dde" stroke-width="1.5"/><circle cx="426" cy="786" r="4.5" fill="#f0f4fa"/><path d="M439 780 l12 7 -12 7z" fill="#7ab830"/>
  <rect x="543.5" y="705.5" width="75" height="99" fill="url(#stb)" stroke="#111" stroke-width="1.6"/>
  <rect x="544" y="723" width="74" height="10" fill="#fff" opacity=".22"/>
  <text x="0" y="0" transform="translate(570,776) rotate(-57)" font-family="Liberation Sans" font-weight="bold" font-size="11.5" fill="#b8c8dc" opacity=".75" letter-spacing="1.6">MUSTER</text>
  <circle cx="560" cy="787" r="4.5" fill="#e07818" stroke="#dde" stroke-width="1.5"/><circle cx="581" cy="786" r="4.5" fill="#f0f4fa"/><path d="M594 780 l12 7 -12 7z" fill="#7ab830"/>
  <use href="#doc" x="720" y="764"/>
  <text x="723" y="776" font-family="Liberation Mono" font-size="7.5" fill="#333">a { co</text><text x="723" y="785" font-family="Liberation Mono" font-size="7.5" fill="#333">a:hove</text><text x="723" y="802" font-family="Liberation Mono" font-size="7.5" fill="#333">a.side</text>
 </svg>
 <div class="t il" style="left:273px;top:436px">DS-EXTHDD</div>
 <div class="t il" style="left:428px;top:436px">Desktop</div>
 <div class="t il" style="left:583px;top:436px">Dokumente</div>
 <div class="t il" style="left:738px;top:436px">Downloads</div>
 <div class="t il" style="left:273px;top:534px">Wallpapers</div>
 <div class="t il" style="left:428px;top:534px">public_html</div>
 <div class="t il" style="left:582px;top:534px">background.jpg</div>
 <div class="t il" style="left:738px;top:534px">channels.conf</div>
 <div class="t il" style="left:273px;top:665px">gnome-splash-08.png</div>
 <div class="t il" style="left:427px;top:665px">gnome-splash-08.</div>
 <div class="t il" style="left:427px;top:679px">thumb.png</div>
 <div class="t il" style="left:583px;top:665px">index.php</div>
 <div class="t il" style="left:737px;top:665px">rw9dpiuh.png</div>
 <div class="t il" style="left:273px;top:810px">sicherung.sh</div>
 <div class="t il" style="left:427px;top:810px">streambox.jpg</div>
 <div class="t il" style="left:582px;top:810px">streambox.xcf</div>
 <div class="t il" style="left:738px;top:810px">styles.css</div>
 <!-- scrollbar -->
 <div class="a" style="left:819px;top:398px;width:18px;height:436px;background:#dadada;border:1px solid #b4b4b4"></div>
 <div class="a" style="left:822px;top:430px;width:12px;height:389px;background:linear-gradient(90deg,#7aa6dc,#5c8ac8);border:1px solid #4a70a8;border-radius:2px"></div>
 <svg class="a" style="left:822px;top:402px" width="12" height="12"><path d="M3 8l3-3 3 3" fill="none" stroke="#888" stroke-width="1.2"/></svg>
 <svg class="a" style="left:822px;top:821px" width="12" height="12"><path d="M3 4l3 3 3-3" fill="none" stroke="#888" stroke-width="1.2"/></svg>
 <!-- status bar -->
 <div class="a" style="left:37px;top:834px;width:800px;height:18px;background:#d8d8d8;border-top:1px solid #c4c4c4"></div>
 <div class="t" style="left:39px;top:835px;color:#111">16 Objekte, freier Speicherplatz: 245,3 GB</div>
</div>

<!-- BOTTOM PANEL -->
<div id="botpanel" class="a" style="left:0;top:875px;width:1440px;height:25px;background:linear-gradient(#3c3c3c,#363636);border-top:1px solid #4a4a4a">
 <div class="a" style="left:4px;top:6px;width:19px;height:14px;background:linear-gradient(#9cc4f0,#4a80c8);border:1px solid #d8e8fa"><div class="a" style="left:0;top:0;width:17px;height:3px;background:#e8f2fc"></div></div>
 <div class="a" style="left:27px;top:2px;width:1px;height:22px;background:#2e2e2e"></div><div class="a" style="left:30px;top:2px;width:1px;height:22px;background:#2e2e2e"></div>
 <div class="a" style="left:37px;top:2px;width:181px;height:23px;background:#3c3c3c;border:1px solid #2e2e2e;border-bottom:none"></div>
 <div class="a" style="left:44px;top:5px;width:17px;height:17px;border-radius:50%;background:radial-gradient(circle at 50% 30%,#8ac0f0,#2a5aa0 55%,#0a2050)"></div>
 <div class="t" style="left:66px;top:5px;color:#e0e0e0">[Eyecandy for your GN...</div>
 <div class="a" style="left:219px;top:2px;width:182px;height:23px;background:#5e5e5e;border:1px solid #4a4a4a;border-bottom:none"></div>
 <div class="a" style="left:225px;top:5px;width:16px;height:16px;background:#d8a020;border:1px solid #f8d878;border-radius:2px"><div class="a" style="left:2px;top:6px;width:10px;height:1px;background:#7a5008"></div><div class="a" style="left:2px;top:3px;width:10px;height:1px;background:#b07a10"></div><div class="a" style="left:2px;top:9px;width:10px;height:1px;background:#b07a10"></div></div>
 <div class="t" style="left:249px;top:5px;color:#ececec">christian - Datei-Browser</div>
 <div class="a" style="left:402px;top:2px;width:184px;height:23px;background:#3c3c3c;border:1px solid #2e2e2e;border-bottom:none"></div>
 <svg class="a" style="left:408px;top:5px" width="16" height="16"><use href="#exi"/></svg>
 <div class="t" style="left:432px;top:5px;color:#e0e0e0">Endless Summer (Albu...</div>
 <div class="a" style="left:1305px;top:1px;width:38px;height:24px;background:#4a5e80;border:1px solid #2a3a50"></div>
 <div class="a" style="left:1317px;top:5px;width:20px;height:12px;background:#5a88c8;border:1px solid #d8ecfa"></div>
 <div class="a" style="left:1308px;top:8px;width:18px;height:13px;background:#8cb4e4;border:1px solid #e8f4fc"></div>
 <div class="a" style="left:1343px;top:1px;width:97px;height:24px;background:#2e2e2e"></div>
 <div class="a" style="left:1372px;top:3px;width:1px;height:21px;background:#3a3a3a"></div><div class="a" style="left:1405px;top:3px;width:1px;height:21px;background:#3a3a3a"></div><div class="a" style="left:1438px;top:3px;width:1px;height:21px;background:#3a3a3a"></div>
</div>

<!-- TOOLTIP -->
<div class="a" style="left:67px;top:14px;width:298px;height:20px;background:#f6f4b8;border:1px solid #8a8a60"></div>
<div class="t" style="left:71px;top:16px;color:#111;letter-spacing:-0.07px">Installierte Anwendungen durchsuchen und starten</div>
<svg class="a" style="left:62px;top:9px" width="12" height="16"><path d="M1 1 L1 12 L4 9 L6.5 14 L8.5 13 L6 8 L10 8 Z" fill="#ddd" stroke="#555" stroke-width=".8"/></svg>

</body></html>
